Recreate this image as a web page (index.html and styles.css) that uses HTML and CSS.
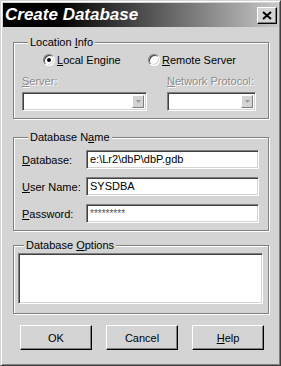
FILE: index.html
```html
<!DOCTYPE html>
<html lang="en">

<head>
    <meta charset="UTF-8">
    <title>Create Database</title>
    <link rel="stylesheet" href="styles.css">
</head>

<body>
    <div class="window">
        <div class="titlebar">
            <span class="title">Create Database</span>
            <button class="close">
                <svg width="10" height="9" viewBox="0 0 10 9">
                    <path d="M1 1 L9 8 M9 1 L1 8" stroke="#000" stroke-width="2" fill="none" />
                </svg>
            </button>
        </div>

        <div class="content">
            <div class="group location">
                <div class="legend"><span>Location <u>I</u>nfo</span></div>
                <div class="radios">
                    <div class="radio"><span class="circle checked"></span><span><u>L</u>ocal Engine</span></div>
                    <div class="radio"><span class="circle"></span><span><u>R</u>emote Server</span></div>
                </div>
                <div class="combos">
                    <div class="field">
                        <div class="caption disabled"><u>S</u>erver:</div>
                        <div class="combo">
                            <span class="drop">
                                <svg width="5" height="3" viewBox="0 0 5 3"><path d="M0 0 H5 L2.5 3 Z" fill="#9a9a9a" /></svg>
                            </span>
                        </div>
                    </div>
                    <div class="field">
                        <div class="caption disabled"><u>N</u>etwork Protocol:</div>
                        <div class="combo">
                            <span class="drop">
                                <svg width="5" height="3" viewBox="0 0 5 3"><path d="M0 0 H5 L2.5 3 Z" fill="#9a9a9a" /></svg>
                            </span>
                        </div>
                    </div>
                </div>
            </div>

            <div class="group dbname">
                <div class="legend"><span>Database N<u>a</u>me</span></div>
                <div class="row">
                    <label><u>D</u>atabase:</label>
                    <div class="input">e:\Lr2\dbP\dbP.gdb</div>
                </div>
                <div class="row">
                    <label><u>U</u>ser Name:</label>
                    <div class="input">SYSDBA</div>
                </div>
                <div class="row">
                    <label><u>P</u>assword:</label>
                    <div class="input password">*********</div>
                </div>
            </div>

            <div class="group options">
                <div class="legend"><span>Database <u>O</u>ptions</span></div>
                <div class="memo"></div>
            </div>

            <div class="buttons">
                <button class="btn">OK</button>
                <button class="btn">Cancel</button>
                <button class="btn"><u>H</u>elp</button>
            </div>
        </div>
    </div>
</body>

</html>
```

FILE: styles.css
```css
* {
    margin: 0px;
    padding: 0px;
    box-sizing: border-box;
}

body {
    font-family: "Liberation Sans", Arial, sans-serif;
    font-size: 11px;
    color: #000;
    background: #d4d4d4;
}

.window {
    width: 281px;
    height: 366px;
    background: #d4d4d4;
    border: 1px solid;
    border-color: #d4d4d4 #404040 #404040 #d4d4d4;
    box-shadow: inset 1px 1px #fff, inset -1px -1px #808080;
    padding: 2px;
    display: flex;
    flex-direction: column;
}

.titlebar {
    height: 24px;
    display: flex;
    align-items: center;
    justify-content: space-between;
    padding: 0 1px 0 2px;
    background: linear-gradient(to right, #000 0%, #000 20%, #c8c8c8 100%);
}

.title {
    color: #fff;
    font-size: 17px;
    font-weight: bold;
    font-style: italic;
}

.close {
    width: 20px;
    height: 17px;
    margin-top: 1px;
    display: flex;
    align-items: center;
    justify-content: center;
    background: #d4d4d4;
    border: 1px solid;
    border-color: #fff #000 #000 #fff;
    box-shadow: inset -1px -1px #808080;
}

.content {
    padding: 15px 9px 0 10px;
}

.group {
    border: 1px solid #808080;
    box-shadow: 1px 1px 0 #fff, inset 1px 1px 0 #fff;
}

.legend {
    margin: -7px 0 0 6px;
    height: 13px;
    line-height: 13px;
    display: flex;
}

.legend span {
    padding: 0 2px;
    background: #d4d4d4;
}

/* location info */

.location {
    height: 77px;
    padding-left: 8px;
}

.radios {
    margin-top: 4px;
    height: 14px;
    padding-left: 21px;
    display: grid;
    grid-template-columns: 105px auto;
    align-items: center;
}

.radio {
    display: flex;
    align-items: center;
    gap: 2px;
}

.circle {
    width: 12px;
    height: 12px;
    border-radius: 50%;
    background: #fff;
    border: 1px solid;
    border-color: #808080 #fff #fff #808080;
    box-shadow: inset 1px 1px #404040, inset -1px -1px #d4d4d4;
    display: flex;
    align-items: center;
    justify-content: center;
}

.circle.checked::after {
    content: "";
    width: 4px;
    height: 4px;
    border-radius: 50%;
    background: #000;
}

.combos {
    margin-top: 8px;
    display: grid;
    grid-template-columns: 125px 89px;
    column-gap: 20px;
}

.caption {
    height: 13px;
    line-height: 13px;
}

.disabled {
    color: #8c8c8c;
    text-shadow: 1px 1px 0 #fff;
}

.combo {
    margin-top: 4px;
    height: 19px;
    background: #fff;
    border: 1px solid;
    border-color: #808080 #fff #fff #808080;
    box-shadow: inset 1px 1px #404040, inset -1px -1px #d4d4d4;
    padding: 2px;
    display: flex;
    justify-content: flex-end;
}

.drop {
    width: 12px;
    background: #d4d4d4;
    border: 1px solid;
    border-color: #fff #808080 #808080 #fff;
    display: flex;
    align-items: center;
    justify-content: center;
}

/* database name */

.dbname {
    margin-top: 18px;
    height: 94px;
    padding: 0 9px 0 8px;
}

.row {
    display: grid;
    grid-template-columns: 64px 173px;
    align-items: center;
    margin-top: 8px;
}

.legend + .row {
    margin-top: 6px;
}

.input {
    height: 19px;
    line-height: 15px;
    padding: 1px 3px;
    background: #fff;
    border: 1px solid;
    border-color: #808080 #fff #fff #808080;
    box-shadow: inset 1px 1px #404040, inset -1px -1px #d4d4d4;
    white-space: nowrap;
    overflow: hidden;
}

.input.password {
    font-size: 10px;
    color: #555;
}

/* options */

.options {
    margin-top: 14px;
    height: 69px;
    padding-left: 4px;
}

.memo {
    margin-top: 1px;
    width: 245px;
    height: 51px;
    background: #fff;
    border: 1px solid;
    border-color: #808080 #fff #fff #808080;
    box-shadow: inset 1px 1px #404040, inset -1px -1px #d4d4d4;
}

.buttons {
    margin-top: 11px;
    padding-left: 7px;
    display: flex;
    gap: 14px;
}

.btn {
    width: 72px;
    height: 25px;
    font-family: "Liberation Sans", Arial, sans-serif;
    font-size: 11px;
    color: #000;
    background: #d4d4d4;
    border: 1px solid;
    border-color: #fff #000 #000 #fff;
    box-shadow: inset -1px -1px #808080;
}
```
